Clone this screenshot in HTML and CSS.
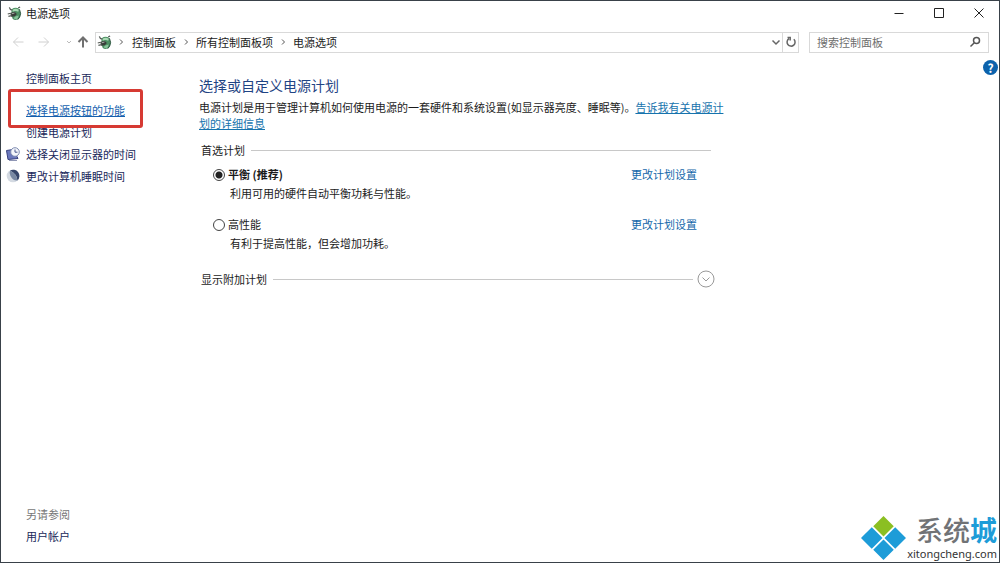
FILE: index.html
```
<!DOCTYPE html>
<html lang="zh-CN">
<head>
<meta charset="utf-8">
<title>电源选项</title>
<link rel="stylesheet" href="styles.css">
</head>
<body>
<svg class="defs" aria-hidden="true">
  <symbol id="power" viewBox="0 0 16 16">
    <path d="M5 3.500Q9 .5 13 3.200L14.500 8Q14 13 11 14.500Q8 15.500 6 13.500L4.500 9z" fill="#4c8f62"/>
    <path d="M6 4Q9 2 12.500 4L12 6Q9 4.500 6 6z" fill="#a9d9b4"/>
    <path d="M8 11.500L12.500 10L11.500 13Q9.500 14.500 7.500 13.500z" fill="#88c49a"/>
    <path d="M13.300 3.500L14.500 8Q14 12.500 11.500 14.500" fill="none" stroke="#234c37"/>
    <path d="M3.500 7.500L8 6L10.500 8.500L8.500 11L4.500 11.500z" fill="#393d39"/>
    <path d="M.8 8.500L4 7.700M1.500 11L5 10.200M2.500 1.500Q3 4 5.500 4.500M12 2L14 1" fill="none" stroke="#555b56" stroke-width="1.300"/>
    <path d="M5 8.300L8 7.500" stroke="#b0b6b0"/>
  </symbol>
</svg>
<div class="window">
  <header class="titlebar">
    <svg class="app-icon"><use href="#power"/></svg>
    <h1 class="title">电源选项</h1>
    <div class="controls">
      <button class="control" aria-label="最小化"><svg viewBox="0 0 10 10"><path d="M.5 5.500h9"/></svg></button>
      <button class="control" aria-label="最大化"><svg viewBox="0 0 10 10"><path d="M.5.500h9v9h-9z"/></svg></button>
      <button class="control" aria-label="关闭"><svg viewBox="0 0 10 10"><path d="M.5.500l9 9m0-9l-9 9"/></svg></button>
    </div>
  </header>
  <nav class="navbar" aria-label="地址栏">
    <div class="arrows">
      <button class="arrow back" aria-label="后退"><svg viewBox="0 0 12 12"><path d="M11.500 6H1.500M6 1.500L1.500 6L6 10.500"/></svg></button>
      <button class="arrow forward" aria-label="前进"><svg viewBox="0 0 12 12"><path d="M.5 6h10M6 1.500L10.500 6L6 10.500"/></svg></button>
      <button class="arrow recent" aria-label="最近的位置"><svg viewBox="0 0 12 12"><path d="M4 5l2 2l2-2"/></svg></button>
      <button class="arrow up" aria-label="上移"><svg viewBox="0 0 12 12"><path d="M6 11.500V1.500M1.500 6L6 1.500L10.500 6"/></svg></button>
    </div>
    <div class="address">
      <svg class="app-icon"><use href="#power"/></svg>
      <svg class="chevron" viewBox="0 0 6 8"><path d="M2 1.500L4.500 4L2 6.500"/></svg>
      <a href="#" class="crumb">控制面板</a>
      <svg class="chevron" viewBox="0 0 6 8"><path d="M2 1.500L4.500 4L2 6.500"/></svg>
      <a href="#" class="crumb">所有控制面板项</a>
      <svg class="chevron" viewBox="0 0 6 8"><path d="M2 1.500L4.500 4L2 6.500"/></svg>
      <a href="#" class="crumb">电源选项</a>
      <button class="history" aria-label="以前的位置"><svg viewBox="0 0 12 12"><path d="M2.500 4.500L6 8L9.500 4.500"/></svg></button>
      <button class="refresh" aria-label="刷新"><svg viewBox="0 0 12 12"><path d="M8.800 3.200A4 4 0 1 1 4 2.700M2.500 1.500H5.200V4.500"/></svg></button>
    </div>
    <div class="search">
      <input class="search-input" type="text" placeholder="搜索控制面板" aria-label="搜索控制面板">
      <svg class="search-icon" viewBox="0 0 12 12"><circle cx="7.500" cy="4.500" r="3"/><path d="M5.300 6.700L1.500 10.500"/></svg>
    </div>
  </nav>
  <div class="body">
    <aside class="sidebar">
      <a href="#" class="side-link home">控制面板主页</a>
      <a href="#" class="side-link marked">选择电源按钮的功能</a>
      <a href="#" class="side-link">创建电源计划</a>
      <a href="#" class="side-link"><svg class="side-icon" viewBox="0 0 14 14"><path d="M.5 3.500L7 2.500L12 11.500L2 12.500z" fill="#6b78bd" stroke="#36407f"/><path d="M3 13.500h8" stroke="#8f96b5"/><circle cx="9" cy="5" r="4.300" fill="#f4f6fb" stroke="#7e8bb0"/><path d="M9 2.500V5.200H11.500" fill="none" stroke="#46568b"/></svg>选择关闭显示器的时间</a>
      <a href="#" class="side-link"><svg class="side-icon" viewBox="0 0 14 14"><circle cx="7" cy="7" r="6.300" fill="#d4dae2"/><path d="M4 1.500A6.300 6.300 0 0 1 11.500 11.500Q11 5 4 1.500z" fill="#34456a"/><path d="M4 1.500Q11 5 11.500 11.500Q7 12 4.500 7Q3 4 4 1.500z" fill="#7788a3"/></svg>更改计算机睡眠时间</a>
      <div class="see-also">
        <h2 class="see-title">另请参阅</h2>
        <a href="#" class="side-link">用户帐户</a>
      </div>
    </aside>
    <main class="content">
      <h2 class="heading">选择或自定义电源计划</h2>
      <p class="intro">电源计划是用于管理计算机如何使用电源的一套硬件和系统设置(如显示器亮度、睡眠等)。<a href="#" class="link underlined">告诉我有关电源计划的详细信息</a></p>
      <fieldset class="plans">
        <legend class="divider">首选计划</legend>
        <div class="plan">
          <input type="radio" class="radio" name="plan" id="balanced" aria-describedby="balanced-text" checked>
          <label for="balanced" class="plan-name">平衡 (推荐)</label>
          <a href="#" class="link">更改计划设置</a>
          <p class="plan-text" id="balanced-text">利用可用的硬件自动平衡功耗与性能。</p>
        </div>
        <div class="plan">
          <input type="radio" class="radio" name="plan" id="high" aria-describedby="high-text">
          <label for="high" class="plan-name">高性能</label>
          <a href="#" class="link">更改计划设置</a>
          <p class="plan-text" id="high-text">有利于提高性能，但会增加功耗。</p>
        </div>
      </fieldset>
      <div class="divider more"><span>显示附加计划</span><button class="expand" aria-label="显示附加计划"><svg viewBox="0 0 18 18"><circle cx="9" cy="9" r="8"/><path d="M5.500 7.500L9 11L12.500 7.500"/></svg></button></div>
    </main>
  </div>
  <button class="help" aria-label="帮助">?</button>
  <div class="brand">
    <svg class="brand-mark" viewBox="0 0 46 46"><path d="M23 1L33.500 11.500L23 22L12.500 11.500z" fill="#8bbf22"/><path d="M11 12.500L22 23.500L11 34.500L0 23.500zM35 12.500L46 23.500L35 34.500L24 23.500zM23 25L33.500 35.500L23 46L12.500 35.500z" fill="#1d9cd8"/></svg>
    <div class="brand-text"><div class="brand-name">系统<span class="brand-accent">城</span></div><div class="brand-url">xitongcheng.com</div></div>
  </div>
</div>
</body>
</html>
```
FILE: styles.css
```
* { box-sizing: border-box; }
body {
  margin: 0;
  color: #1b1b1b;
  font: 11px/16px "Noto Sans CJK SC", sans-serif;
}
h1, h2, p { margin: 0; font-size: 11px; font-weight: 400; }
button { padding: 0; border: 0; background: none; font: inherit; }
a { color: inherit; text-decoration: none; }
svg { display: block; fill: none; flex: none; }
.defs { position: absolute; width: 0; height: 0; }
.window {
  position: relative;
  display: flex;
  flex-direction: column;
  min-height: 100vh;
  border: 1px solid #394149;
  background: #fff;
}
.titlebar { display: flex; align-items: center; height: 24px; padding-left: 6px; }
.app-icon { width: 15px; height: 15px; }
.title { margin-left: 4px; }
.controls { display: flex; margin-left: auto; }
.control { display: grid; place-items: center; width: 40px; height: 24px; }
.control svg { width: 10px; height: 10px; stroke: #222; }

.navbar { display: flex; align-items: center; margin-top: 6px; padding: 0 10px; }
.arrows { display: flex; width: 84px; }
.arrow { display: grid; place-items: center; height: 22px; flex: none; }
.arrow svg { width: 12px; height: 12px; stroke: #d0d0d0; }
.back { width: 14px; }
.forward { width: 38px; }
.recent { width: 6px; }
.recent svg { stroke: #bbb; }
.up { width: 28px; }
.up svg { stroke: #707070; stroke-width: 2; }
.address { display: flex; align-items: center; flex: 1; height: 21px; padding-left: 1px; border: 1px solid #d9d9d9; }
.chevron { width: 6px; height: 8px; margin: 0 7px; stroke: #555; }
.address .app-icon + .chevron { margin: 0 8px 0 6px; }
.history { margin-left: auto; }
.history svg, .refresh svg { width: 12px; height: 12px; stroke: #666; stroke-width: 1.5; }
.refresh { display: grid; place-items: center; width: 16px; height: 19px; border-left: 1px solid #d9d9d9; }
.search { display: flex; align-items: center; width: 180px; height: 21px; margin-left: 10px; padding: 0 7px; border: 1px solid #d9d9d9; }
.search-input { flex: 1; min-width: 0; padding: 0; border: 0; outline: 0; background: none; font: inherit; }
.search-input::placeholder { color: #6d6d6d; opacity: 1; }
.search-icon { width: 12px; height: 12px; stroke: #555; stroke-width: 1.5; }

.body { display: flex; flex: 1; }
.sidebar { display: flex; flex-direction: column; width: 198px; padding: 17px 0 15px 25px; color: #20285a; }
.side-link { display: flex; align-items: center; height: 22px; }
.side-link.home { height: 16px; margin-bottom: 13px; }
.side-link.marked { position: relative; align-self: flex-start; color: #145fae; text-decoration: underline; }
.side-link.marked::after {
  content: "";
  position: absolute;
  inset: -10px -18px -7px;
  border: 3px solid #d63a33;
  border-radius: 3px;
}
.side-icon { width: 14px; height: 14px; margin: 0 6px 0 -20px; }
.see-also { margin-top: auto; }
.see-title { color: #777; height: 19px; }

.content { flex: 1; max-width: 528px; padding-top: 22px; }
.heading { color: #1f4484; font-size: 14px; line-height: 20px; }
.intro { margin-top: 4px; }
.link { color: #1467aa; }
.underlined { color: #1673ad; text-decoration: underline; }
.plans { min-width: 0; margin: 11px 16px 0 2px; padding: 0; border: 0; }
.divider { display: flex; align-items: center; width: 100%; padding: 0; }
.divider::after { content: ""; order: 1; flex: 1; height: 1px; margin-left: 6px; background: #c8c8c8; }
.plan {
  display: grid;
  grid-template-columns: 15px 1fr 80px;
  align-items: center;
  margin: 8px 0 15px 12px;
}
.plan + .plan { margin-bottom: 0; }
.radio {
  appearance: none;
  width: 12px;
  height: 12px;
  margin: 2px 0 0;
  border: 1px solid #444;
  border-radius: 50%;
}
.radio:checked { background: radial-gradient(circle, #222 3px, transparent 4px); }
.radio:checked + .plan-name { font-weight: 700; }
.plan-text { grid-column: 2 / 4; margin: 3px 0 0 2px; }
.more { width: auto; margin: 19px 12px 0 2px; }
.expand { order: 2; margin-left: 4px; }
.expand svg { width: 18px; height: 18px; stroke: #999; }

.help {
  position: absolute;
  top: 59px;
  right: 1px;
  width: 15px;
  height: 15px;
  border-radius: 50%;
  background: #0c62ac;
  color: #fff;
  font-size: 12px;
  font-weight: 700;
  line-height: 15px;
}
.brand { position: absolute; right: 2px; bottom: 1px; display: flex; align-items: center; }
.brand-mark { width: 45px; height: 45px; margin-right: 1px; }
.brand-text { display: flex; flex-direction: column; align-items: flex-end; }
.brand-name { color: #717376; font-size: 27px; font-weight: 500; line-height: 32px; }
.brand-accent { color: #1d9cd8; font-weight: 700; }
.brand-url { color: #333; font: 11px/15px "Noto Sans", sans-serif; }
```
